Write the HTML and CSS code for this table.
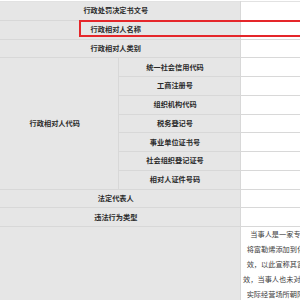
FILE: index.html
```html
<!DOCTYPE html>
<html lang="zh-CN">
<head>
<meta charset="utf-8">
<title>行政处罚信息</title>
<link rel="stylesheet" href="styles.css">
</head>
<body>
<div class="sheet">
  <table class="info">
    <colgroup>
      <col class="c-main">
      <col class="c-sub">
      <col class="c-val">
    </colgroup>
    <tbody>
      <tr><th colspan="2">行政处罚决定书文号</th><td></td></tr>
      <tr><th colspan="2">行政相对人名称</th><td></td></tr>
      <tr><th colspan="2">行政相对人类别</th><td></td></tr>
      <tr><th rowspan="7">行政相对人代码</th><th class="sub">统一社会信用代码</th><td></td></tr>
      <tr><th class="sub">工商注册号</th><td></td></tr>
      <tr><th class="sub">组织机构代码</th><td></td></tr>
      <tr><th class="sub">税务登记号</th><td></td></tr>
      <tr><th class="sub">事业单位证书号</th><td></td></tr>
      <tr><th class="sub">社会组织登记证号</th><td></td></tr>
      <tr><th class="sub">相对人证件号码</th><td></td></tr>
      <tr><th colspan="2">法定代表人</th><td></td></tr>
      <tr><th colspan="2">违法行为类型</th><td></td></tr>
      <tr class="tall">
        <th colspan="2">违法事实</th>
        <td class="text">
          <div>当事人是一家专业从事化妆品研发生产与销售的企业，在其官方网站及产品宣传页面中宣称</div>
          <div>将富勒烯添加到化妆品中可起到抗氧化、抗衰老、美白祛斑等功效，并对外宣传其具有显著的</div>
          <div>效，以此宣称其富勒烯系列产品具有修复肌肤屏障及淡化细纹等多重功效，但无法提供相关的</div>
          <div>效，当事人也未对其宣传内容进行核实，且未能提供产品检验报告及其他证明材料，经查当事人</div>
          <div>实际经营场所朝阳区某大厦内存放的涉案产品共计若干件，货值金额经核算合计为人民币若干</div>
          <div>元，上述事实有现场检查笔录、询问笔录、产品宣传资料及网站页面截图等证据为证。当事人</div>
          <div>的上述行为违反了《中华人民共和国广告法》的相关规定，构成发布虚假广告的违法行为，</div>
          <div>依据相关法律法规，本机关依法对当事人作出行政处罚，责令其停止发布违法广告，并在</div>
          <div>相应范围内消除影响，同时处以罚款。当事人应自收到本决定书之日起十五日内缴纳罚款。</div>
          <div>如不服本处罚决定，可在法定期限内依法申请行政复议或者提起行政诉讼。</div>
          <div>逾期不缴纳罚款的，本机关将依法每日按罚款数额的百分之三加处罚款。</div>
          <div>本决定书自送达之日起生效，当事人应当按照本决定书的要求履行相关义务。</div>
          <div>当事人对本处罚决定无异议，已按期缴纳全部罚款并完成整改。</div>
          <div>特此决定。</div>
        </td>
      </tr>
    </tbody>
  </table>
  <div class="highlight"></div>
</div>
</body>
</html>
```

FILE: styles.css
```css
html, body {
  margin: 0;
  padding: 0;
  overflow: hidden;
  background: #ffffff;
}

body {
  font-family: "Noto Sans CJK SC", "Noto Sans", sans-serif;
  color: #333333;
}

.sheet {
  position: relative;
  padding-top: 1px;
}

.info {
  border-collapse: collapse;
  table-layout: fixed;
  width: 548px;
}

.c-main { width: 118px; }
.c-sub { width: 122px; }
.c-val { width: 308px; }

.info tr {
  height: 18.75px;
}

.info th,
.info td {
  border: 1px solid #d8d8d8;
  padding: 0;
  font-size: 7.2px;
  line-height: 1;
  vertical-align: middle;
}

.info th {
  background: #e6e6e6;
  color: #2a2a2a;
  font-weight: bold;
  text-align: center;
  padding-right: 8px;
  white-space: nowrap;
}

.info td {
  background: #ffffff;
}

.info tr:first-child th,
.info tr:first-child td {
  border-top-color: #e2e2e2;
}

.info th:first-child {
  border-left: none;
}

.info td.text {
  text-align: center;
  vertical-align: top;
  color: #3c3c3c;
  font-weight: normal;
  line-height: 15px;
  padding: 0 0 6px;
}

.info td.text div {
  white-space: nowrap;
}

.highlight {
  position: absolute;
  left: 79px;
  top: 20px;
  width: 260px;
  height: 13px;
  border: 2px solid #e5262a;
}
```
